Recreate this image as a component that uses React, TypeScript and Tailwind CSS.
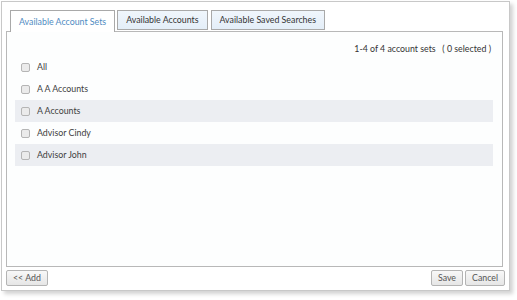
const rows = ["All", "A A Accounts", "A Accounts", "Advisor Cindy", "Advisor John"];

function Checkbox() {
  return <span className="h-[9px] w-[9px] shrink-0 rounded-[2px] border border-[#b5b5b5] bg-[#ebebeb]" />;
}

export default function App() {
  return (
    <div className="h-[300px] w-[517px] bg-white pl-px pt-px font-['Lato',sans-serif] text-[8.8px] text-[#404040]">
      <div className="flex h-[290px] w-[509px] flex-col border border-[#c8c8c8] bg-white px-[4px] shadow-[3px_3px_4px_rgba(0,0,0,0.18)]">
        {/* Tabs */}
        <div className="ml-[4px] mt-[8px] flex h-[21px] gap-[2px]">
          <div className="relative z-10 -mb-px flex items-center border border-b-0 border-[#a9a9a9] bg-white px-[8px] text-[#4f8bc2]">
            Available Account Sets
          </div>
          <div className="flex h-[20px] items-center border border-[#a9a9a9] bg-gradient-to-b from-[#f0f6fc] to-[#e4eef8] px-[8px] text-[#333]">
            Available Accounts
          </div>
          <div className="ml-[1px] flex h-[20px] items-center border border-[#a9a9a9] bg-gradient-to-b from-[#f0f6fc] to-[#e4eef8] px-[8px] text-[#333]">
            Available Saved Searches
          </div>
        </div>

        {/* Panel */}
        <div className="flex h-[236px] w-[497px] flex-col border border-[#b8b8b8] bg-[#fdfefe]">
          <div className="mt-[10px] flex h-[14px] items-center justify-end whitespace-pre pr-[11px] text-[#333]">
            {"1-4 of 4 account sets   ( 0 selected )"}
          </div>
          <div className="flex flex-col pl-[8px] pr-[9px]">
            {rows.map((r, i) => (
              <div
                key={r}
                className={`flex h-[22px] items-center gap-[7px] pl-[6px] ${i % 2 === 0 && i > 0 ? "bg-[#eceef2]" : ""}`}
              >
                <Checkbox />
                <span>{r}</span>
              </div>
            ))}
          </div>
        </div>

        {/* Buttons */}
        <div className="mt-[3px] flex items-center">
          <button className="h-[16px] rounded-[2px] border border-[#b4b4b4] bg-gradient-to-b from-[#f8f8f8] to-[#e6e6e6] px-[6px] leading-none text-[#555]">
            &lt;&lt; Add
          </button>
          <div className="ml-auto flex gap-[2px]">
            <button className="h-[16px] rounded-[2px] border border-[#b4b4b4] bg-gradient-to-b from-[#f8f8f8] to-[#e6e6e6] px-[6px] leading-none text-[#555]">
              Save
            </button>
            <button className="h-[16px] rounded-[2px] border border-[#b4b4b4] bg-gradient-to-b from-[#f8f8f8] to-[#e6e6e6] px-[6px] leading-none text-[#555]">
              Cancel
            </button>
          </div>
        </div>
      </div>
    </div>
  );
}
